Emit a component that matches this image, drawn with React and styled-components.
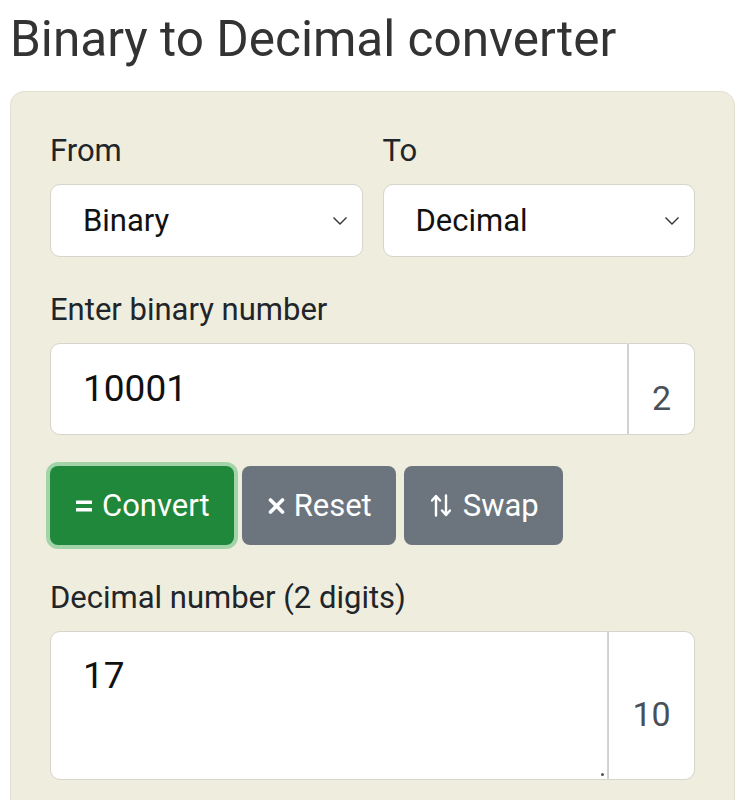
import React from "react";
import styled, { createGlobalStyle } from "styled-components";

const Global = createGlobalStyle`
  html, body { margin: 0; padding: 0; background: #ffffff; }
  body { font-family: Roboto, "Noto Sans", Arial, sans-serif; color: #212529; }
  * { box-sizing: border-box; }
`;

const Page = styled.div`
  padding: 0 10px;
`;

const Title = styled.h1`
  margin: 0;
  padding-top: 9px;
  font-size: 49.5px;
  font-weight: 400;
  line-height: 60px;
  color: #333333;
`;

const Card = styled.div`
  margin-top: 22px;
  background: #efeddd;
  border: 1px solid #e2e0d0;
  border-radius: 14px;
  padding: 41px 39px 40px;
  display: flex;
  flex-direction: column;
`;

const Row = styled.div`
  display: grid;
  grid-template-columns: 1fr 1fr;
  gap: 20px;
`;

const Field = styled.div`
  display: flex;
  flex-direction: column;
  margin-bottom: ${(p) => p.$mb || 0}px;
`;

const Label = styled.label`
  font-size: 31px;
  line-height: 36px;
  margin-bottom: 15px;
  color: #212529;
`;

const SelectBox = styled.div`
  position: relative;
  height: 73px;
  background: #fff;
  border: 1px solid #d6d4cc;
  border-radius: 10px;
  display: flex;
  align-items: center;
  padding-left: 32px;
  font-size: 31px;
  color: #111;
`;

const Chevron = styled.svg`
  position: absolute;
  right: 14px;
  top: 50%;
  margin-top: -5px;
`;

const Group = styled.div`
  display: flex;
  height: ${(p) => p.$h}px;
`;

const Input = styled.div`
  flex: 1;
  background: #fff;
  border: 1px solid #d6d4cc;
  border-radius: 10px 0 0 10px;
  padding: ${(p) => p.$pt}px 32px 0;
  font-size: 37px;
  line-height: 44px;
  color: #111;
  position: relative;
`;

const Addon = styled.div`
  width: ${(p) => p.$w}px;
  background: #fff;
  border: 1px solid #d6d4cc;
  border-left-color: #d0d0d0;
  border-radius: 0 10px 10px 0;
  display: flex;
  align-items: center;
  justify-content: center;
  padding-top: 17px;
  font-size: 34px;
  color: #495057;
`;

const Grip = styled.span`
  position: absolute;
  right: 3px;
  bottom: 3px;
  width: 3px;
  height: 3px;
  background: #555;
  border-radius: 50%;
`;

const Buttons = styled.div`
  display: flex;
  gap: 8px;
  margin: 31px 0 35px;
  align-items: center;
`;

const Button = styled.button`
  height: 79px;
  border: none;
  border-radius: 8px;
  padding: 0 ${(p) => p.$pr}px 0 ${(p) => p.$pl}px;
  font-family: Roboto, "Noto Sans", Arial, sans-serif;
  font-size: 31px;
  color: #fff;
  background: ${(p) => (p.$primary ? "#1f883a" : "#6c757d")};
  box-shadow: ${(p) => (p.$primary ? "0 0 0 4px #a3d4a9" : "none")};
  display: flex;
  align-items: center;
  gap: ${(p) => p.$gap}px;
`;

const Glyph = styled.svg`
  flex: none;
  display: block;
`;

const EqualsIcon = () => (
  <Glyph width="16" height="12" viewBox="0 0 16 12">
    <rect x="0" y="0.5" width="16" height="3.6" rx="0.6" fill="#fff" />
    <rect x="0" y="7.9" width="16" height="3.6" rx="0.6" fill="#fff" />
  </Glyph>
);

const TimesIcon = () => (
  <Glyph width="17" height="16" viewBox="0 0 17 16">
    <path d="M2.5 2 L14.5 14 M14.5 2 L2.5 14" stroke="#fff" strokeWidth="3.6" strokeLinecap="round" />
  </Glyph>
);

const SwapIcon = () => (
  <Glyph width="20" height="23" viewBox="0 0 20 23">
    <path d="M5 21.5 V2.5 M1 6.5 L5 2 L9 6.5" fill="none" stroke="#fff" strokeWidth="2.4" strokeLinecap="round" strokeLinejoin="round" />
    <path d="M15 1.5 V20.5 M11 16.5 L15 21 L19 16.5" fill="none" stroke="#fff" strokeWidth="2.4" strokeLinecap="round" strokeLinejoin="round" />
  </Glyph>
);

const ChevronIcon = () => (
  <Chevron width="16" height="10" viewBox="0 0 16 10">
    <path d="M1.5 1.5 L8 8 L14.5 1.5" fill="none" stroke="#333" strokeWidth="1.4" />
  </Chevron>
);

export default function App() {
  return (
    <>
      <Global />
      <Page>
        <Title>Binary to Decimal converter</Title>
        <Card>
          <Row>
            <Field $mb={35}>
              <Label>From</Label>
              <SelectBox>
                Binary
                <ChevronIcon />
              </SelectBox>
            </Field>
            <Field $mb={35}>
              <Label>To</Label>
              <SelectBox>
                Decimal
                <ChevronIcon />
              </SelectBox>
            </Field>
          </Row>
          <Field>
            <Label>Enter binary number</Label>
            <Group $h={92}>
              <Input $pt={23}>10001</Input>
              <Addon $w={67}>2</Addon>
            </Group>
          </Field>
          <Buttons>
            <Button $primary $pl={26} $pr={24} $gap={10}>
              <EqualsIcon />
              Convert
            </Button>
            <Button $pl={26} $pr={24} $gap={9}>
              <TimesIcon />
              Reset
            </Button>
            <Button $pl={27} $pr={24} $gap={12}>
              <SwapIcon />
              Swap
            </Button>
          </Buttons>
          <Field>
            <Label>Decimal number (2 digits)</Label>
            <Group $h={149}>
              <Input $pt={22}>
                17
                <Grip />
              </Input>
              <Addon $w={87}>10</Addon>
            </Group>
          </Field>
        </Card>
      </Page>
    </>
  );
}
